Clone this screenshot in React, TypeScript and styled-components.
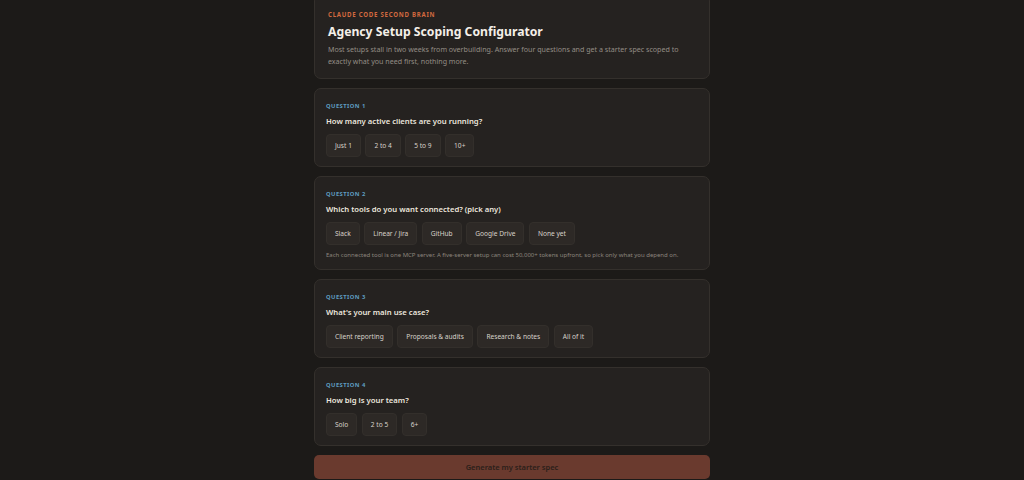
import React from 'react';
import styled, { createGlobalStyle } from 'styled-components';

const GlobalStyle = createGlobalStyle`
  html, body {
    margin: 0;
    padding: 0;
    background: #1c1a18;
  }
  body {
    font-family: 'Noto Sans', 'Open Sans', sans-serif;
    color: #ede7df;
  }
`;

type Question = {
  label: string;
  title: string;
  options: string[];
  note?: string;
};

const questions: Question[] = [
  {
    label: 'Question 1',
    title: 'How many active clients are you running?',
    options: ['Just 1', '2 to 4', '5 to 9', '10+'],
  },
  {
    label: 'Question 2',
    title: 'Which tools do you want connected? (pick any)',
    options: ['Slack', 'Linear / Jira', 'GitHub', 'Google Drive', 'None yet'],
    note: 'Each connected tool is one MCP server. A five-server setup can cost 50,000+ tokens upfront, so pick only what you depend on.',
  },
  {
    label: 'Question 3',
    title: "What's your main use case?",
    options: ['Client reporting', 'Proposals & audits', 'Research & notes', 'All of it'],
  },
  {
    label: 'Question 4',
    title: 'How big is your team?',
    options: ['Solo', '2 to 5', '6+'],
  },
];

const App = () => {
  return (
    <>
      <GlobalStyle />
      <Page>
        <HeaderCard>
          <Eyebrow>Claude Code Second Brain</Eyebrow>
          <Title>Agency Setup Scoping Configurator</Title>
          <Intro>
            Most setups stall in two weeks from overbuilding. Answer four questions and get a starter spec scoped to
            exactly what you need first, nothing more.
          </Intro>
        </HeaderCard>
        {questions.map((q) => (
          <QuestionCard key={q.label}>
            <QuestionLabel>{q.label}</QuestionLabel>
            <QuestionTitle>{q.title}</QuestionTitle>
            <Options>
              {q.options.map((o) => (
                <Option key={o}>{o}</Option>
              ))}
            </Options>
            {q.note && <Note>{q.note}</Note>}
          </QuestionCard>
        ))}
        <Generate disabled>Generate my starter spec</Generate>
      </Page>
    </>
  );
};

export default App;

const Page = styled.main`
  width: 396px;
  margin: -6px auto 0;
  display: flex;
  flex-direction: column;
  gap: 9px;
`;

const Card = styled.section`
  background: #252220;
  border: 1px solid #34302c;
  border-radius: 7px;
`;

const HeaderCard = styled(Card)`
  padding: 16px 13px 11px;
`;

const Eyebrow = styled.div`
  font-size: 6.1px;
  font-weight: 700;
  letter-spacing: 0.12em;
  text-transform: uppercase;
  color: #d2693f;
  line-height: 8px;
`;

const Title = styled.h1`
  margin: 5px 0 3px;
  font-size: 12.2px;
  line-height: 16px;
  font-weight: 700;
  color: #f4efe8;
`;

const Intro = styled.p`
  margin: 0;
  font-size: 7.1px;
  line-height: 12px;
  color: #948d85;
`;

const QuestionCard = styled(Card)`
  padding: 13px 11px 9px;
`;

const QuestionLabel = styled.div`
  font-size: 5.8px;
  font-weight: 700;
  letter-spacing: 0.08em;
  text-transform: uppercase;
  color: #5f9dc0;
  line-height: 8px;
`;

const QuestionTitle = styled.h2`
  margin: 5px 0 7px;
  font-size: 7.7px;
  line-height: 12px;
  font-weight: 600;
  color: #ece6de;
`;

const Options = styled.div`
  display: flex;
  flex-wrap: wrap;
  gap: 4.5px;
`;

const Option = styled.button`
  height: 23px;
  padding: 0 8px;
  border: 1px solid #332f2b;
  border-radius: 4px;
  background: #2d2926;
  color: #d8d2ca;
  font-family: inherit;
  font-size: 6.6px;
  cursor: pointer;
`;

const Note = styled.p`
  margin: 6px 0 0;
  font-size: 6px;
  line-height: 9px;
  color: #8c857d;
`;

const Generate = styled.button`
  height: 24px;
  border: none;
  border-radius: 5px;
  background: #6a3a2e;
  color: #2a1f1a;
  font-family: inherit;
  font-size: 7.5px;
  font-weight: 600;
`;
